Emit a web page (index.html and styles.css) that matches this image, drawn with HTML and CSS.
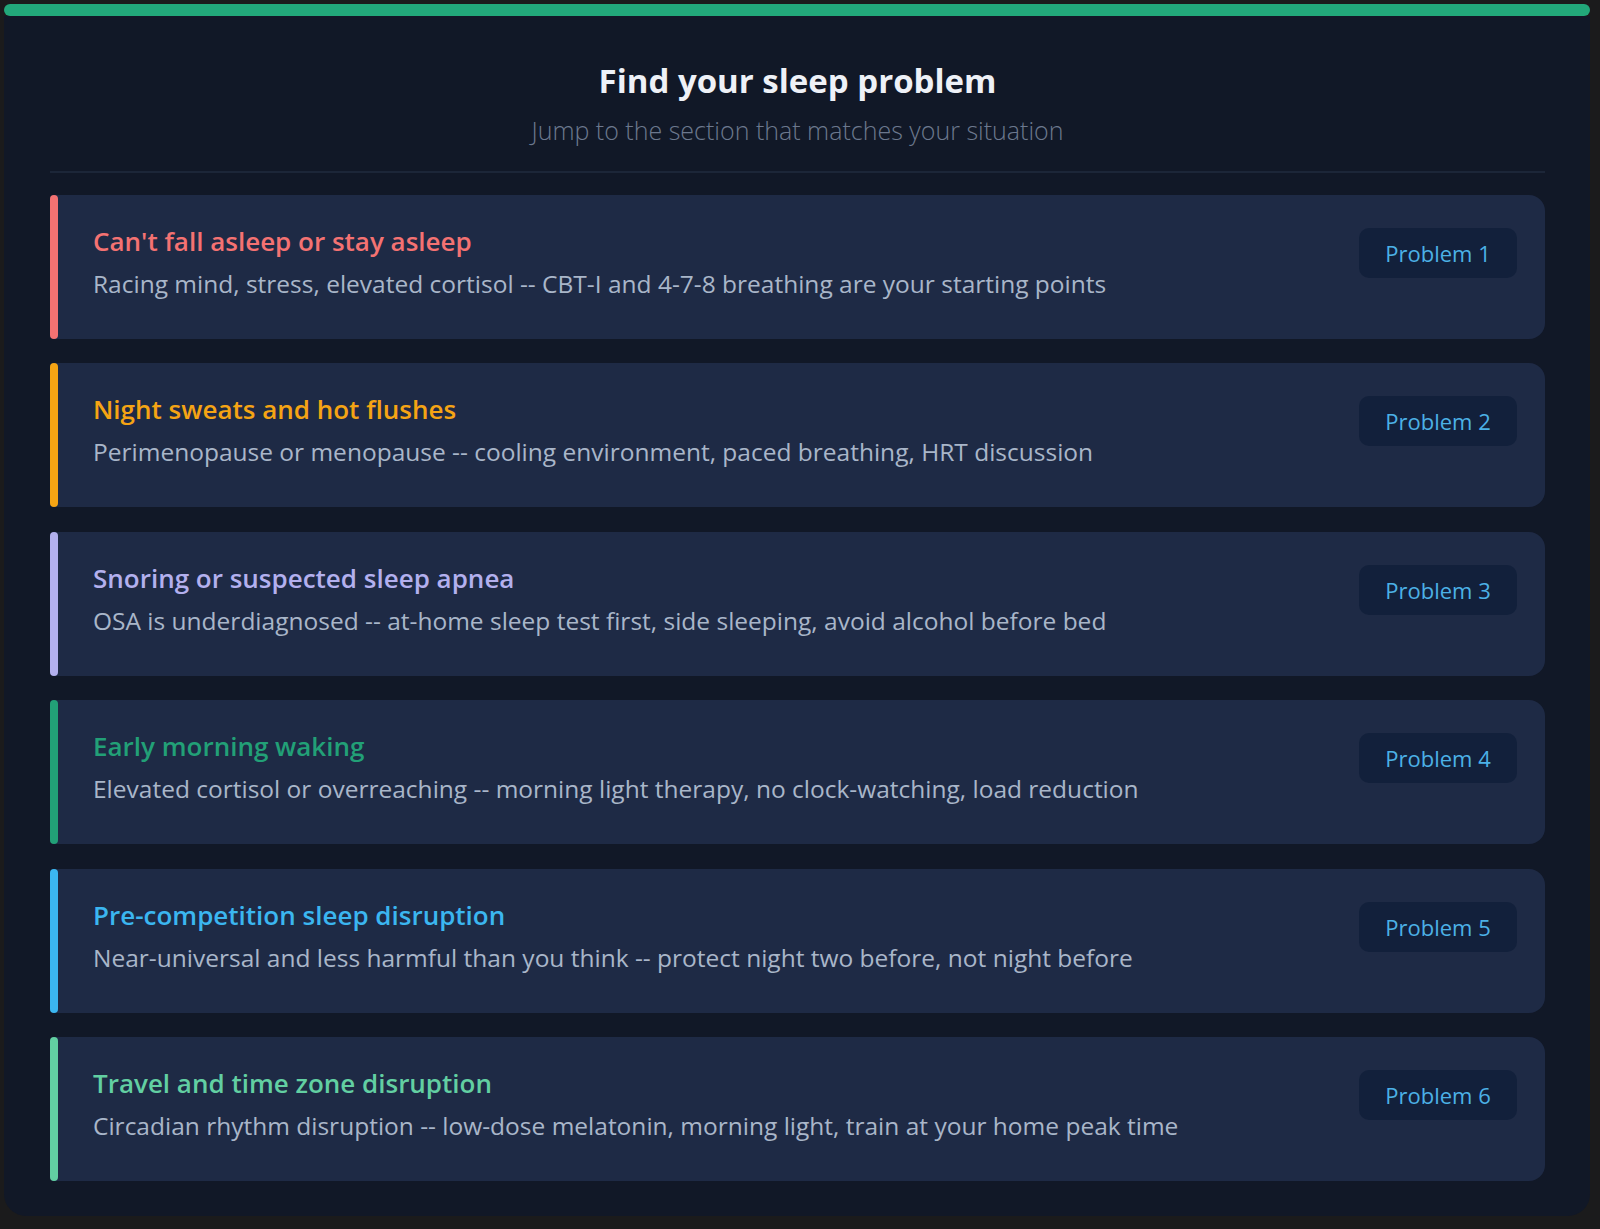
FILE: index.html
```html
<!DOCTYPE html>
<html>
<head>
    <title>Find your sleep problem</title>
    <link rel="stylesheet" href="styles.css">
</head>
<body>

<div class="panel">
    <div class="accent"></div>
    <div class="box">
        <div class="header">
            <h1>Find your sleep problem</h1>
            <p>Jump to the section that matches your situation</p>
        </div>

        <div class="list">
            <div class="item red">
                <div class="text">
                    <h3>Can't fall asleep or stay asleep</h3>
                    <p>Racing mind, stress, elevated cortisol -- CBT-I and 4-7-8 breathing are your starting points</p>
                </div>
                <span class="tag">Problem 1</span>
            </div>
            <div class="item amber">
                <div class="text">
                    <h3>Night sweats and hot flushes</h3>
                    <p>Perimenopause or menopause -- cooling environment, paced breathing, HRT discussion</p>
                </div>
                <span class="tag">Problem 2</span>
            </div>
            <div class="item lilac">
                <div class="text">
                    <h3>Snoring or suspected sleep apnea</h3>
                    <p>OSA is underdiagnosed -- at-home sleep test first, side sleeping, avoid alcohol before bed</p>
                </div>
                <span class="tag">Problem 3</span>
            </div>
            <div class="item green">
                <div class="text">
                    <h3>Early morning waking</h3>
                    <p>Elevated cortisol or overreaching -- morning light therapy, no clock-watching, load reduction</p>
                </div>
                <span class="tag">Problem 4</span>
            </div>
            <div class="item sky">
                <div class="text">
                    <h3>Pre-competition sleep disruption</h3>
                    <p>Near-universal and less harmful than you think -- protect night two before, not night before</p>
                </div>
                <span class="tag">Problem 5</span>
            </div>
            <div class="item mint">
                <div class="text">
                    <h3>Travel and time zone disruption</h3>
                    <p>Circadian rhythm disruption -- low-dose melatonin, morning light, train at your home peak time</p>
                </div>
                <span class="tag">Problem 6</span>
            </div>
        </div>
    </div>
</div>

</body>
</html>
```

FILE: styles.css
```css
body { margin: 4px 10px 12px 4px; background-color: #1b1b1c; font-family: "Open Sans", "Noto Sans", sans-serif; }
.panel { display: flex; flex-direction: column; }
.accent { height: 12px; border-radius: 6px; background-color: #22a87a; }
.box { background-color: #111827; border-radius: 0 0 22px 22px; padding: 0 45px 35px 46px; }
.header { text-align: center; padding: 44px 0 0; height: 157px; box-sizing: border-box; border-bottom: 2px solid #1c2638; margin-bottom: 22px; }
.header h1 { margin: 0; font-size: 33px; line-height: 42px; font-weight: 700; color: #eef1f7; }
.header p { margin: 11px 0 0; font-size: 25px; line-height: 34px; font-weight: 300; color: #6c788e; }
.list { display: flex; flex-direction: column; gap: 24.4px; }
.item { display: flex; align-items: flex-start; height: 144px; background-color: #1e2a45; border-radius: 4px 16px 16px 4px; }
.item::before { content: ""; width: 8px; align-self: stretch; border-radius: 4px; background-color: var(--c); }
.text { flex: 1; padding: 29px 0 0 35px; }
.text h3 { margin: 0; font-size: 26px; line-height: 34px; font-weight: 600; color: var(--c); }
.text p { margin: 10px 0 0; font-size: 24.5px; line-height: 32px; color: #a9b6c9; }
.tag { margin: 33px 28px 0 0; width: 158px; height: 50px; line-height: 50px; text-align: center; border-radius: 10px; background-color: #12203b; color: #4cb1e6; font-size: 22px; }
.red { --c: #f47272; }
.amber { --c: #f5a414; }
.lilac { --c: #b3b0ee; }
.green { --c: #22a077; }
.sky { --c: #3bb6f0; }
.mint { --c: #62cfa2; }
```
